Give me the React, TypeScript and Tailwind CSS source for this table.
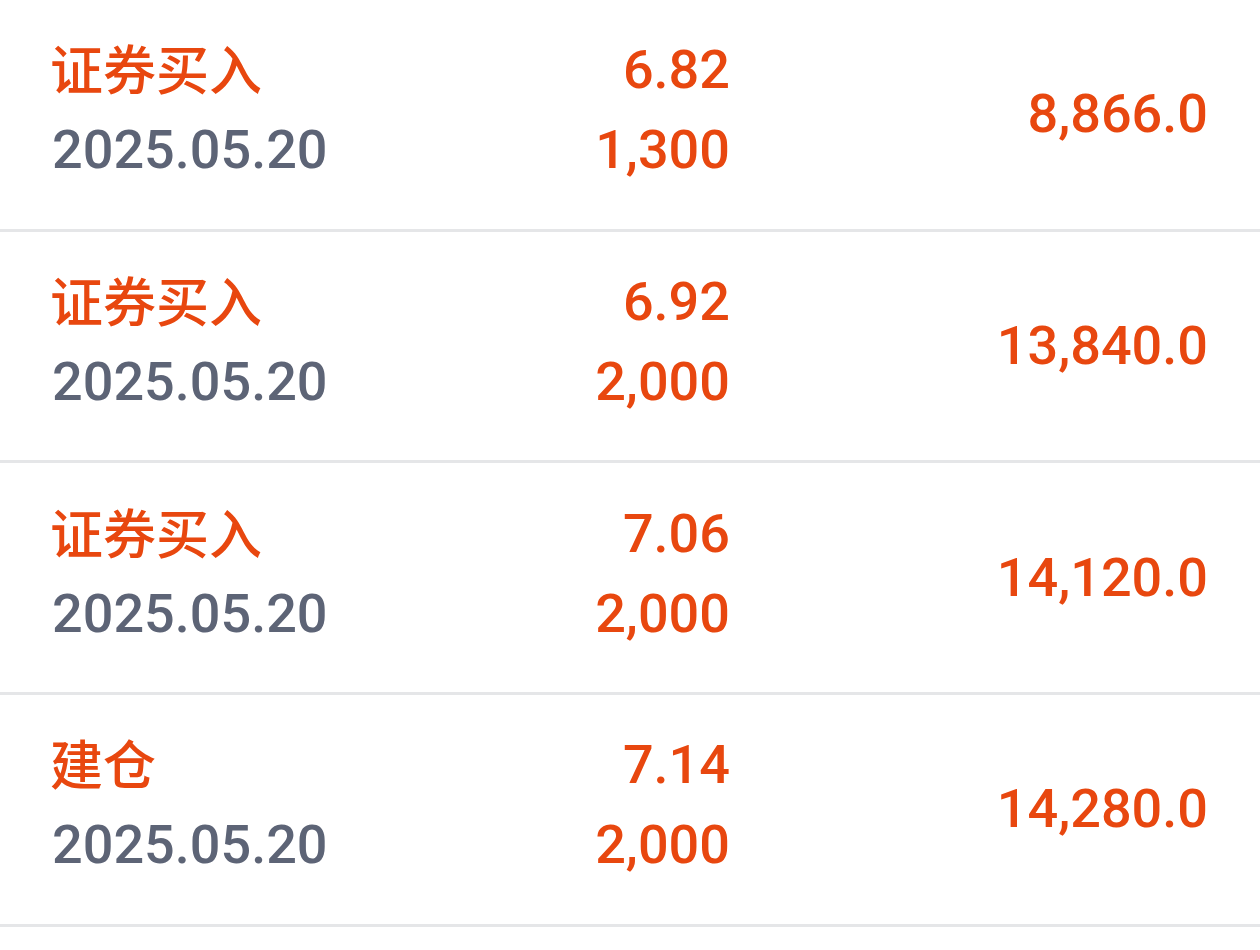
import React from "react";

const rows = [
  { title: "证券买入", date: "2025.05.20", price: "6.82", qty: "1,300", amount: "8,866.0" },
  { title: "证券买入", date: "2025.05.20", price: "6.92", qty: "2,000", amount: "13,840.0" },
  { title: "证券买入", date: "2025.05.20", price: "7.06", qty: "2,000", amount: "14,120.0" },
  { title: "建仓", date: "2025.05.20", price: "7.14", qty: "2,000", amount: "14,280.0" },
];

export default function App() {
  return (
    <div
      className="w-[1260px] h-[950px] bg-white overflow-hidden font-medium"
      style={{ fontFamily: 'Roboto, "Noto Sans CJK SC", sans-serif' }}
    >
      {rows.map((r, i) => (
        <div
          key={i}
          className="h-[231.67px] border-b-[3px] border-[#e5e6e8] flex items-center pb-[8px]"
        >
          <div className="pl-[53px] w-[360px] flex flex-col">
            <div
              className="text-[53px] leading-[74px] text-[#e8470f] -ml-[3px]"
              style={{ fontFamily: '"Noto Sans CJK SC", sans-serif' }}
            >
              {r.title}
            </div>
            <div className="mt-[6px] text-[54px] leading-[80px] text-[#5d6476] -ml-[1px]">{r.date}</div>
          </div>
          <div className="w-[370px] flex flex-col items-end text-[#e8470f]">
            <div className="text-[54px] leading-[80px]">{r.price}</div>
            <div className="text-[54px] leading-[80px]">{r.qty}</div>
          </div>
          <div className="flex-1 pr-[52px] flex justify-end text-[#e8470f] pt-[8px]">
            <div className="text-[54px] leading-[80px]">{r.amount}</div>
          </div>
        </div>
      ))}
    </div>
  );
}
